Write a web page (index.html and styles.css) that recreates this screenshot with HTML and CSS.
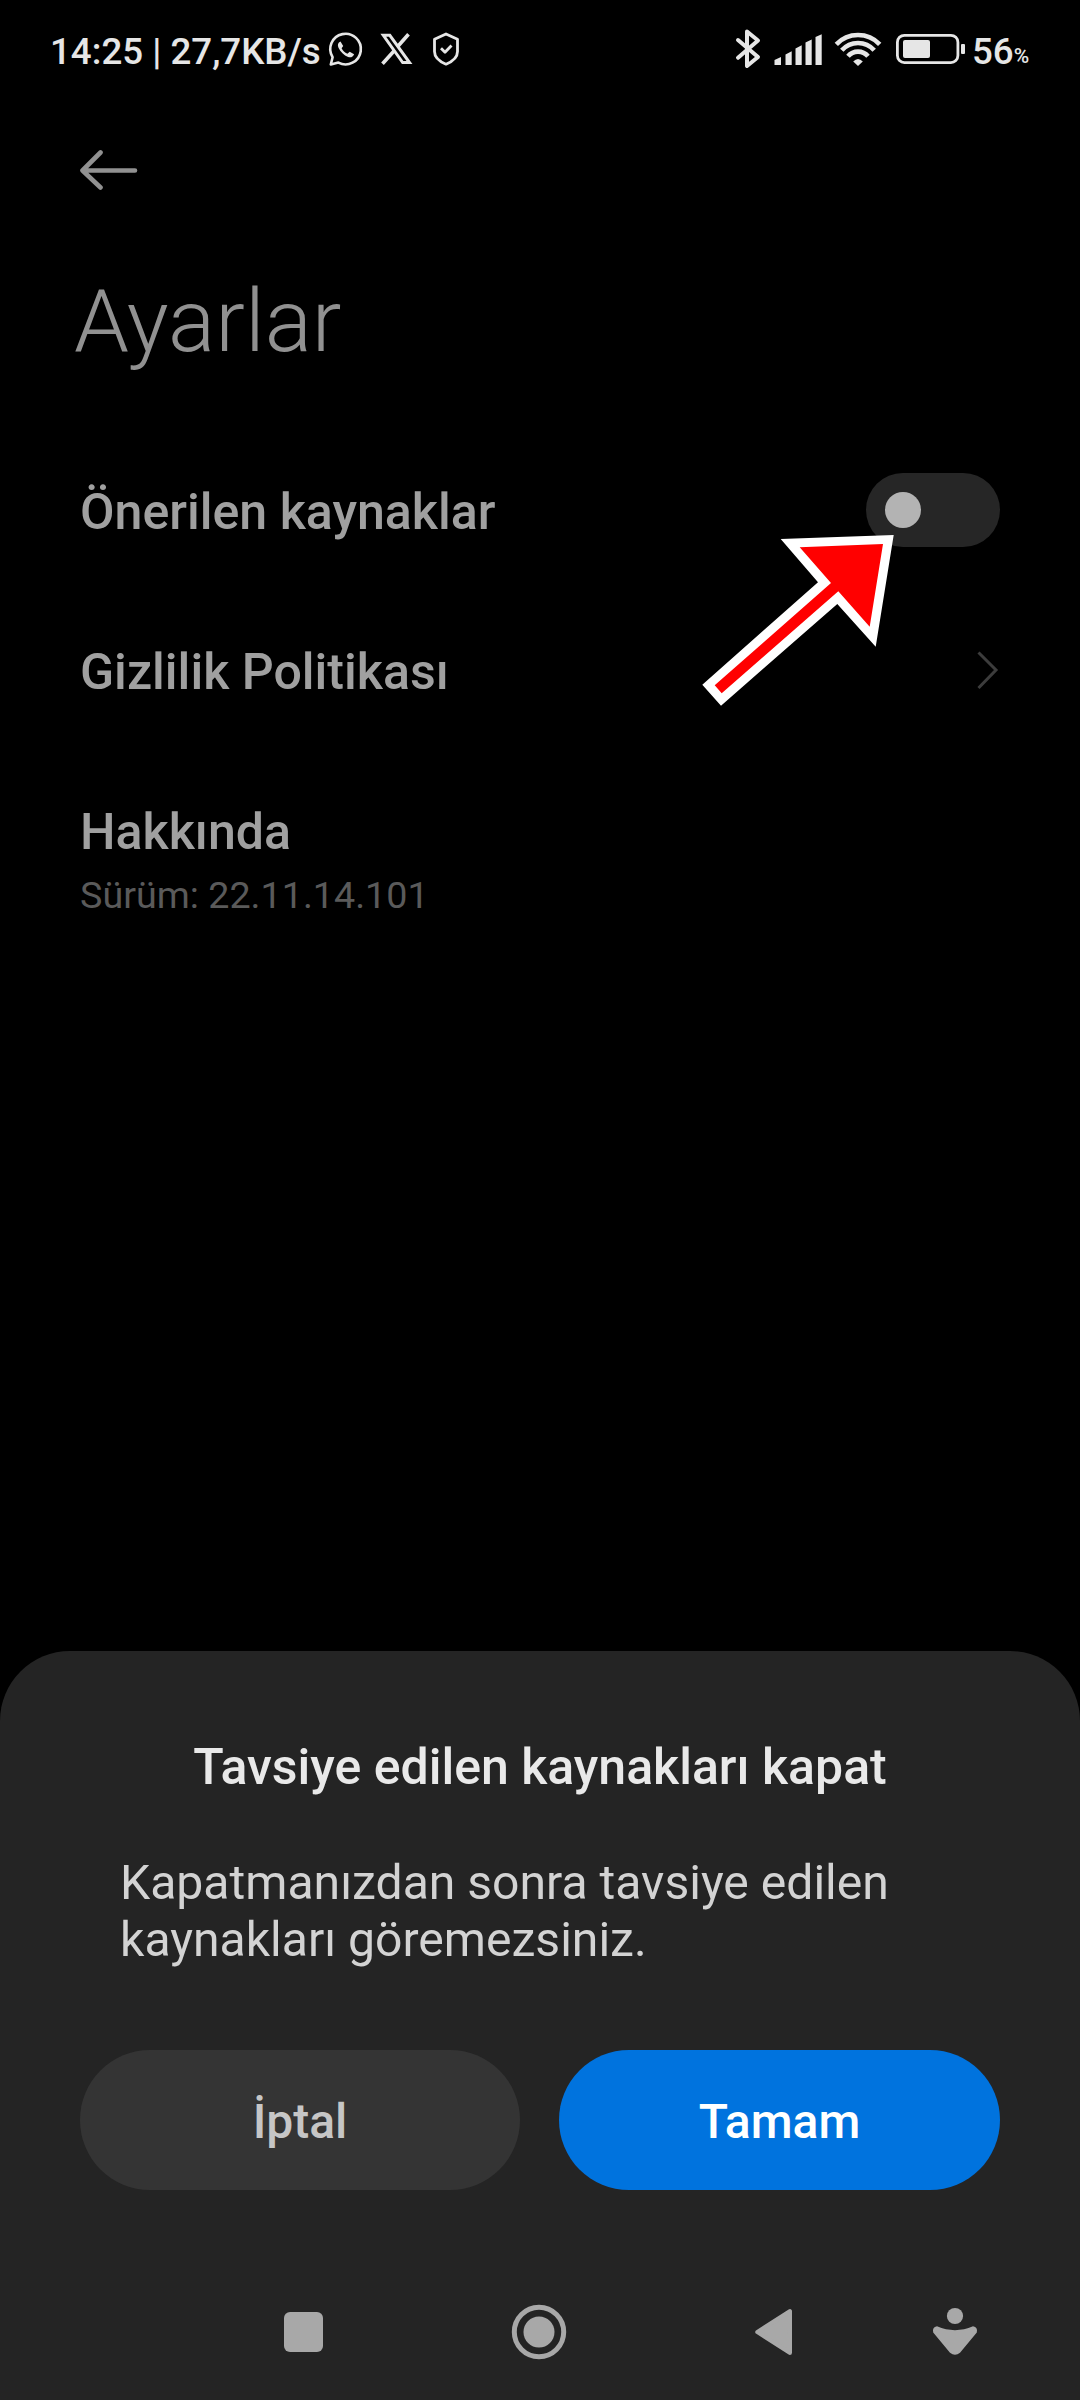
FILE: index.html
```html
<!DOCTYPE html>
<html lang="tr">
<head>
  <meta charset="utf-8">
  <title>Ayarlar</title>
  <link rel="stylesheet" href="styles.css">
</head>
<body>
  <div class="phone">
    <header class="status">
      <span class="status-text">14:25 | 27,7KB/s</span>
      <div class="status-left">
        <svg viewBox="326 24 40 50" width="40" height="50" fill="none" stroke="#e6e6e6" stroke-width="2.6">
          <path d="M330.800 64.500 L332.600 57.200 A15.300 15.300 0 1 1 338.400 62.600 Z" stroke-linejoin="round"/>
          <path d="M340.500 41.600 c-2.600 1.200-3.200 3.600-2 6.200 c2 4.200 5.400 7.600 9.600 9.200 c2.600 1 5.200-.2 6-2.800 l-4.400-2.400 -2.300 2 c-2.600-1.200-4.600-3.200-5.800-5.600 l1.600-2.200 z" fill="#e6e6e6" stroke="none"/>
        </svg>
        <svg viewBox="378 24 38 50" width="38" height="50" fill="none" stroke="#e6e6e6">
          <path d="M383.300 35.300 H389.800 L409.500 62.500 H402.700 Z" stroke-width="3"/>
          <path d="M408.500 34.300 L397.500 46.800 M394 51 L382.500 63.700" stroke-width="3.600"/>
        </svg>
        <svg viewBox="430 24 32 50" width="32" height="50" fill="none" stroke="#e6e6e6" stroke-width="2.800" stroke-linejoin="round">
          <path d="M446 34 L457.500 39.300 V51.500 C457.500 57.500 452.500 61.500 446 64.200 C439.500 61.500 434.500 57.500 434.500 51.500 V39.300 Z"/>
          <path d="M441 48.300 L445 52.300 L451.500 45.500"/>
        </svg>
      </div>
      <div class="status-right">
        <svg viewBox="734 24 28 50" width="28" height="50" fill="none" stroke="#e6e6e6" stroke-width="4" stroke-linejoin="round" stroke-linecap="round">
          <path d="M738 40 L758 57 L747 66 V31.500 L758 40.500 L738 57.800"/>
        </svg>
        <svg viewBox="772 24 52 50" width="52" height="50" fill="#e6e6e6">
          <path d="M774.500 60 L781 57 V65 H774.500Z M785.500 54.500 L791.700 51.300 V65 H785.500Z M795.500 48.500 L801.700 45.300 V65 H795.500Z M805.500 42.500 L811.700 39.500 V65 H805.500Z M815.500 37 L821.700 34.200 V65 H815.500Z"/>
        </svg>
        <svg viewBox="833 24 50 50" width="50" height="50" fill="none" stroke="#e6e6e6" stroke-width="4.600">
          <path d="M836.300 44.300 A30 30 0 0 1 879.700 44.300"/>
          <path d="M841.800 50.300 A21.500 21.500 0 0 1 874.200 50.300"/>
          <path d="M848 56.300 A13 13 0 0 1 868 56.300"/>
          <path d="M858 66 L853.200 61.500 Q858 56.500 862.800 61.500Z" fill="#e6e6e6" stroke="none"/>
        </svg>
        <svg viewBox="894 24 74 50" width="74" height="50" fill="none">
          <rect x="897.400" y="35.300" width="60.500" height="27.300" rx="7" stroke="#e6e6e6" stroke-width="2.800"/>
          <rect x="903" y="40" width="27" height="18" rx="2" fill="#e6e6e6"/>
          <rect x="961" y="44" width="4" height="10" rx="1" fill="#e6e6e6"/>
        </svg>
        <span class="battery-text">56<small>%</small></span>
      </div>
    </header>

    <main class="page">
      <svg class="back" viewBox="0 0 60 42" width="60" height="42" fill="none" stroke="#919191" stroke-width="4.600" stroke-linecap="round" stroke-linejoin="round">
        <path d="M55 21.500 H3 M20.500 3.500 L2.500 21.500 L20.500 38.500"/>
      </svg>
      <h1 class="title">Ayarlar</h1>
      <section class="row">
        <div class="row-label">Önerilen kaynaklar</div>
        <div class="toggle"><span class="knob"></span></div>
        <svg class="pointer" viewBox="700 530 196 178" width="196" height="178">
          <path d="M780.700 539 L893.700 535 L875.700 646.700 L837.300 604 L721 705.700 L702.300 684.700 L818 582.300 Z" fill="#fff"/>
          <path d="M799.700 547.300 L883 544 L869.700 626.700 L838.300 591.300 L721.700 693.300 L714.700 685.300 L831 583 Z" fill="#f00"/>
        </svg>
      </section>
      <section class="row">
        <div class="row-label">Gizlilik Politikası</div>
        <svg viewBox="976 648 24 44" width="24" height="44" fill="none" stroke="#3c3c3c" stroke-width="3">
          <path d="M978.500 652.500 L996 670 L978.500 688"/>
        </svg>
      </section>
      <section class="row about">
        <div class="row-label">Hakkında<div class="version">Sürüm: 22.11.14.101</div></div>
      </section>
    </main>

    <section class="sheet">
      <h2 class="sheet-title">Tavsiye edilen kaynakları kapat</h2>
      <p class="sheet-body">Kapatmanızdan sonra tavsiye edilen kaynakları göremezsiniz.</p>
      <div class="actions">
        <button class="button">İptal</button>
        <button class="button primary">Tamam</button>
      </div>
      <nav class="nav">
        <span class="recent"></span>
        <svg class="home" viewBox="0 0 56 56" width="56" height="56"><circle cx="28" cy="28" r="24.700" fill="none" stroke="#a8a8a8" stroke-width="5"/><circle cx="28" cy="28" r="15.500" fill="#a8a8a8"/></svg>
        <svg class="nav-back" viewBox="754 2307 40 50" width="40" height="50"><path d="M757.500 2332 L789.800 2311.300 V2352.700 Z" fill="#a8a8a8" stroke="#a8a8a8" stroke-width="4.400" stroke-linejoin="round"/></svg>
        <svg class="nav-person" viewBox="930 2306 50 52" width="50" height="52" fill="#a8a8a8"><circle cx="955" cy="2316" r="8.100"/><path d="M937 2326.300 Q955 2334 973 2326.300 Q978 2327 976.800 2332.500 L960 2352.800 Q955 2356.700 950 2352.800 L933.200 2332.500 Q932 2327 937 2326.300Z"/></svg>
      </nav>
    </section>
  </div>
</body>
</html>
```
FILE: styles.css
```css
* { box-sizing: border-box; }

body {
  margin: 0;
  background: #000;
  font-family: Roboto, "Noto Sans", sans-serif;
}

svg { display: block; flex: none; }

.phone {
  display: flex;
  flex-direction: column;
  width: 1080px;
  height: 2400px;
  overflow: hidden;
  background: #000;
}

.status {
  display: flex;
  align-items: flex-start;
  height: 98px;
  padding: 24px 40px 0 50px;
  color: #e6e6e6;
  font-size: 36.700px;
  font-weight: 500;
  line-height: 55px;
}

.status-text { flex: none; width: 276px; white-space: nowrap; }
.status-left { display: flex; gap: 12px; }
.status-left svg:last-child { margin-left: 2px; }
.status-right { display: flex; margin-left: 272px; }
.status-right svg:nth-child(2) { margin-left: 10px; }
.status-right svg:nth-child(3) { margin-left: 9px; }
.status-right svg:nth-child(4) { margin-left: 11px; }
.battery-text { margin-left: 4px; white-space: nowrap; }
.battery-text small { font-size: 21px; line-height: 0; vertical-align: 1px; }

.page {
  flex: 1;
  padding: 51px 80px 0;
}

.title {
  margin: 75px 0 0 -6px;
  color: #919191;
  font-size: 88px;
  font-weight: 300;
  line-height: 110px;
}

.row {
  position: relative;
  display: flex;
  align-items: center;
  justify-content: space-between;
  height: 160px;
  color: #a0a0a0;
}

.title + .row { margin-top: 54px; }

.row-label {
  padding-top: 3px;
  font-size: 50.100px;
  font-weight: 500;
  line-height: 60px;
}

.about { align-items: flex-start; padding-top: 49px; }

.version {
  margin-top: 10px;
  color: #5a5a5a;
  font-size: 37.700px;
  font-weight: 400;
  line-height: 46px;
}

.toggle {
  width: 134px;
  height: 74px;
  padding: 19px;
  border-radius: 37px;
  background: #262626;
}

.knob {
  display: block;
  width: 36px;
  height: 36px;
  border-radius: 50%;
  background: #b3b3b3;
}

.pointer { position: absolute; left: 620px; top: 100px; }

.sheet {
  height: 749px;
  padding: 86px 80px 0;
  border-radius: 70px 70px 0 0;
  background: #242424;
}

.sheet-title {
  margin: 0;
  color: #e9e9e9;
  font-size: 50px;
  font-weight: 500;
  line-height: 60px;
  text-align: center;
}

.sheet-body {
  margin: 57px 40px 0;
  color: #d3d3d3;
  font-size: 48.100px;
  line-height: 57px;
}

.actions {
  display: grid;
  grid-template-columns: 440px 441px;
  gap: 39px;
  margin-top: 82px;
}

.button {
  height: 140px;
  padding: 3px 0 0;
  border: 0;
  border-radius: 70px;
  background: #343434;
  color: #c6c6c6;
  font: 500 48px/60px Roboto, sans-serif;
}

.button.primary { background: #0073de; color: #fff; }

.nav {
  display: flex;
  align-items: center;
  height: 60px;
  margin-top: 112px;
  padding-left: 204px;
}

.recent { width: 39px; height: 40px; border-radius: 6px; background: #a8a8a8; }
.home { margin-left: 188px; }
.nav-back { margin-left: 187px; }
.nav-person { margin-left: 136px; }
```
